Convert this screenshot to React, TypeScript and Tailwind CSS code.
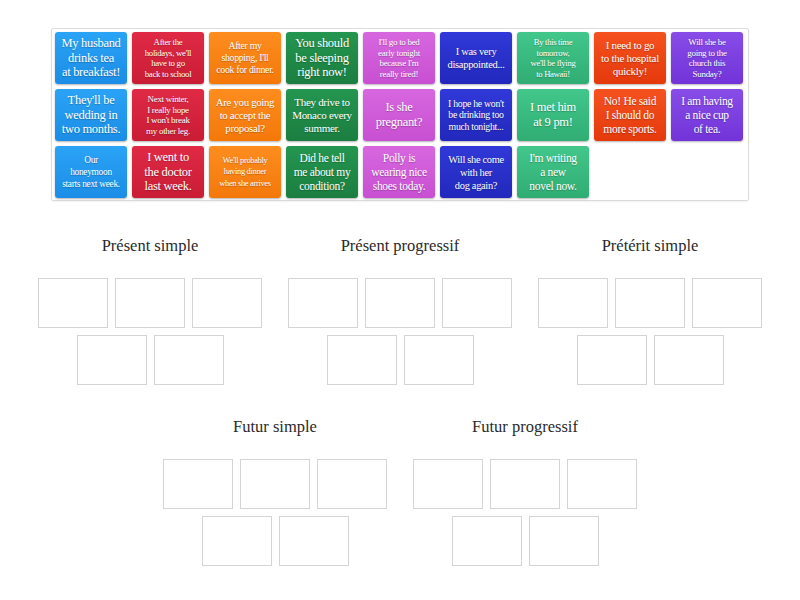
const colors = [
  "bg-linear-to-b from-[#2aa3f6] to-[#1b8de6]",
  "bg-linear-to-b from-[#e02a45] to-[#c91c35]",
  "bg-linear-to-b from-[#fd8d1e] to-[#f47808]",
  "bg-linear-to-b from-[#249650] to-[#1b7e40]",
  "bg-linear-to-b from-[#d767df] to-[#c84fd2]",
  "bg-linear-to-b from-[#3039d8] to-[#2228bc]",
  "bg-linear-to-b from-[#42c78b] to-[#30ad73]",
  "bg-linear-to-b from-[#f5511e] to-[#e4390b]",
  "bg-linear-to-b from-[#884ce8] to-[#7233d8]",
];

type Card = { lines: string[]; size: string };

const cards: Card[] = [
  { lines: ["My husband", "drinks tea", "at breakfast!"], size: "text-[12.5px] leading-[14.5px]" },
  { lines: ["After the", "holidays, we'll", "have to go", "back to school"], size: "text-[8.8px] leading-[10.5px]" },
  { lines: ["After my", "shopping, I'll", "cook for dinner."], size: "text-[9.8px] leading-[12px]" },
  { lines: ["You should", "be sleeping", "right now!"], size: "text-[12.5px] leading-[14.5px]" },
  { lines: ["I'll go to bed", "early tonight", "because I'm", "really tired!"], size: "text-[9px] leading-[10.5px]" },
  { lines: ["I was very", "disappointed..."], size: "text-[10.5px] leading-[13px]" },
  { lines: ["By this time", "tomorrow,", "we'll be flying", "to Hawaii!"], size: "text-[8.6px] leading-[10.5px]" },
  { lines: ["I need to go", "to the hospital", "quickly!"], size: "text-[11px] leading-[13px]" },
  { lines: ["Will she be", "going to the", "church this", "Sunday?"], size: "text-[9px] leading-[10.5px]" },
  { lines: ["They'll be", "wedding in", "two months."], size: "text-[12.5px] leading-[14.5px]" },
  { lines: ["Next winter,", "I really hope", "I won't break", "my other leg."], size: "text-[9px] leading-[10.5px]" },
  { lines: ["Are you going", "to accept the", "proposal?"], size: "text-[10.8px] leading-[13px]" },
  { lines: ["They drive to", "Monaco every", "summer."], size: "text-[11px] leading-[13px]" },
  { lines: ["Is she", "pregnant?"], size: "text-[12.5px] leading-[15px]" },
  { lines: ["I hope he won't", "be drinking too", "much tonight..."], size: "text-[9.8px] leading-[11.5px]" },
  { lines: ["I met him", "at 9 pm!"], size: "text-[12.5px] leading-[15px]" },
  { lines: ["No! He said", "I should do", "more sports."], size: "text-[11.5px] leading-[14px]" },
  { lines: ["I am having", "a nice cup", "of tea."], size: "text-[11.5px] leading-[14px]" },
  { lines: ["Our", "honeymoon", "starts next week."], size: "text-[9.4px] leading-[12px]" },
  { lines: ["I went to", "the doctor", "last week."], size: "text-[12.5px] leading-[14.5px]" },
  { lines: ["We'll probably", "having dinner", "when she arrives"], size: "text-[8.4px] leading-[11.5px]" },
  { lines: ["Did he tell", "me about my", "condition?"], size: "text-[11.5px] leading-[14px]" },
  { lines: ["Polly is", "wearing nice", "shoes today."], size: "text-[11.5px] leading-[14px]" },
  { lines: ["Will she come", "with her", "dog again?"], size: "text-[10.4px] leading-[13px]" },
  { lines: ["I'm writing", "a new", "novel now."], size: "text-[11.5px] leading-[14px]" },
];

const groups = [
  "Présent simple",
  "Présent progressif",
  "Prétérit simple",
  "Futur simple",
  "Futur progressif",
];

function Group({ title }: { title: string }) {
  return (
    <div className="w-[250px] pb-[30px]">
      <h2 className="text-center text-[16.5px] leading-6 text-[#2a2a2a] mb-[20px]">{title}</h2>
      <div className="flex flex-wrap justify-center gap-x-[7px] gap-y-[7px] px-[13px]">
        {[0, 1, 2, 3, 4].map((i) => (
          <div key={i} className="w-[70px] h-[50px] border border-[#d4d4d4] bg-white" />
        ))}
      </div>
    </div>
  );
}

export default function App() {
  return (
    <div className="w-[800px] h-[600px] bg-white font-[family-name:'Liberation_Serif',serif] pt-[28px]">
      {/* Card pool */}
      <div className="mx-auto w-[698px] border border-[#dcdcdc] rounded-[2px] px-[3px] pt-[3px] pb-[2px] shadow-[0_1px_2px_rgba(0,0,0,0.06)]">
        <div className="grid grid-cols-[repeat(9,72px)] gap-[5px]">
          {cards.map((c, i) => (
            <div
              key={i}
              className={`${colors[i % 9]} ${c.size} w-[72px] h-[52px] rounded-[3px] flex flex-col items-center justify-center text-center text-white whitespace-nowrap tracking-[-0.3px] shadow-[0_1px_2px_rgba(0,0,0,0.3)] [text-shadow:0_1px_1px_rgba(0,0,0,0.25)]`}
            >
              {c.lines.map((l, j) => (
                <span key={j}>{l}</span>
              ))}
            </div>
          ))}
        </div>
      </div>

      {/* Drop zones */}
      <div className="mt-[33px] flex flex-wrap justify-center px-[25px]">
        {groups.map((g) => (
          <Group key={g} title={g} />
        ))}
      </div>
    </div>
  );
}
